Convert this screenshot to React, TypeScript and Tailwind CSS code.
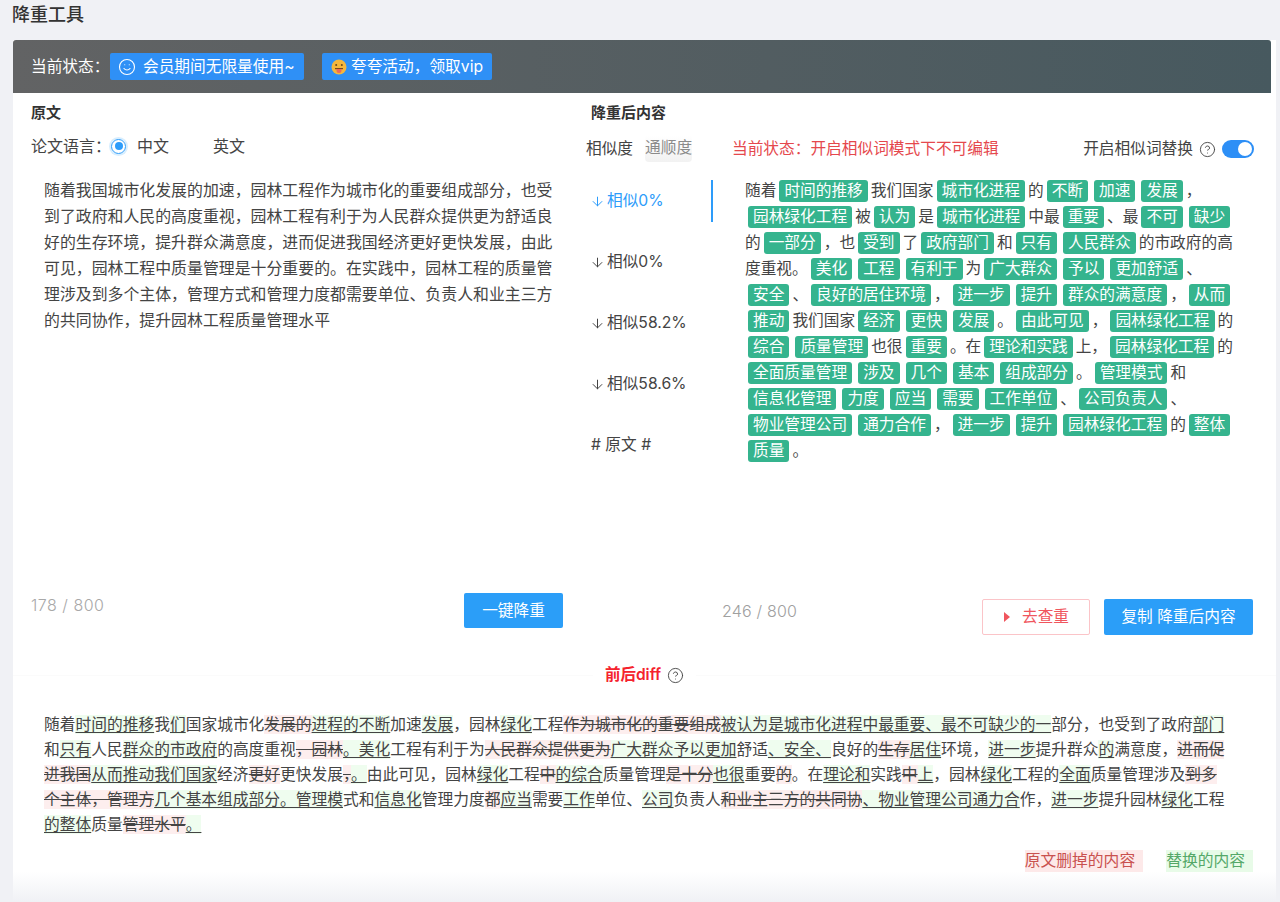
import { ArrowDown, CircleHelp, Smile } from "lucide-react";

// Rewritten text, one entry per line: [...] is a green tag
const resultLines = [
  "随着[时间的推移]我们国家[城市化进程]的[不断][加速][发展]，",
  "[园林绿化工程]被[认为]是[城市化进程]中最[重要]、最[不可][缺少]",
  "的[一部分]，也[受到]了[政府部门]和[只有][人民群众]的市政府的高",
  "度重视。[美化][工程][有利于]为[广大群众][予以][更加舒适]、",
  "[安全]、[良好的居住环境]，[进一步][提升][群众的满意度]，[从而]",
  "[推动]我们国家[经济][更快][发展]。[由此可见]，[园林绿化工程]的",
  "[综合][质量管理]也很[重要]。在[理论和实践]上，[园林绿化工程]的",
  "[全面质量管理][涉及][几个][基本][组成部分]。[管理模式]和",
  "[信息化管理][力度][应当][需要][工作单位]、[公司负责人]、",
  "[物业管理公司][通力合作]，[进一步][提升][园林绿化工程]的[整体]",
  "[质量]。",
];

// Diff text, one entry per line: {...} removed, [...] replaced
const diffLines = [
  "随着[时间的推移]我[们]国家城市化{发展的}[进程的不断]加速[发展]，园林[绿化]工程{作为城市化的重要组成}[被认为是城市化进程中最重要、最不可缺少的一]部分，也受到了政府[部门]",
  "和[只有]人民[群众的市政府]的高度重视{，园林}[。美化]工程有利于为{人民群众提供更为}[广大群众予以更加]舒适[、安全、]良好的{生存}[居住]环境，[进一步]提升群众[的]满意度，{进而促",
  "进我国}[从而推动我们国家]经济{更好}更快发展{，}[。]由此可见，园林[绿化]工程{中}[的综合]质量管理{是十分}[也很]重要{的}。在[理论和]实践{中}[上]，园林[绿化]工程的[全面]质量管理涉及{到多",
  "个主体，管理方}[几个基本组成部分。管理模]式和[信息化]管理力度{都}[应当]需要[工作]单位、[公司]负责人{和业主三方的共同协}[、物业管理公司通力合]作，[进一步]提升园林[绿化]工程",
  "[的整体]质量{管理水平}[。]",
];

const scores = ["相似0%", "相似0%", "相似58.2%", "相似58.6%"];

const ResultLine = ({ line }: { line: string }) => (
  <div className="h-[26px] whitespace-nowrap">
    {line.split(/(\[[^\]]*\])/).map((part, i) =>
      part.startsWith("[") ? (
        <span
          key={i}
          className="mx-[3px] inline-block h-[22px] rounded-[3px] bg-[#35b48e] px-[5px] leading-[22px] text-white"
        >
          {part.slice(1, -1)}
        </span>
      ) : (
        <span key={i}>{part}</span>
      ),
    )}
  </div>
);

const DiffLine = ({ line }: { line: string }) => (
  <div className="h-[25px] whitespace-nowrap">
    {line.split(/(\[[^\]]*\]|\{[^}]*\}|\{[^}]*$|^[^{[]*\})/).map((part, i) => {
      if (part.startsWith("[")) {
        return (
          <span key={i} className="bg-[#effdef] underline underline-offset-2">
            {part.slice(1, -1)}
          </span>
        );
      }
      if (part.startsWith("{") || part.endsWith("}")) {
        return (
          <span key={i} className="bg-[#fdeeee] line-through">
            {part.replace("{", "").replace("}", "")}
          </span>
        );
      }
      return <span key={i}>{part}</span>;
    })}
  </div>
);

export default function App() {
  return (
    <div className="flex h-[902px] w-[1280px] flex-col overflow-hidden bg-[#f0f1f5] font-['Inter','Noto_Sans_CJK_SC',sans-serif] text-[#444]">
      {/* Title */}
      <div className="h-[40px] pl-3 pt-[3px] text-[18px] font-medium leading-[24px] text-[#333]">
        降重工具
      </div>

      <div className="ml-[13px] mr-[4px] flex flex-1 flex-col bg-white">
        {/* Status bar */}
        <div className="mr-[5px] flex h-[53px] items-center rounded-t-[3px] bg-gradient-to-r from-[#626364] to-[#47595f] pl-[18px] text-[15.7px] text-white">
          <span className="w-[79px]">当前状态：</span>
          <span className="flex h-[27px] w-[194px] items-center rounded-[2px] bg-[#2f90f6] pl-[8px]">
            <Smile size={18} strokeWidth={1.5} />
            <span className="ml-[7px]">会员期间无限量使用~</span>
          </span>
          <span className="ml-[18px] flex h-[27px] w-[170px] items-center rounded-[2px] bg-[#2f90f6] pl-[9px]">
            <svg width="16" height="16" viewBox="0 0 16 16">
              <circle cx="8" cy="8" r="7.5" fill="#f5b73c" />
              <circle cx="5.2" cy="6" r="1" fill="#6b4a1c" />
              <circle cx="10.8" cy="6" r="1" fill="#6b4a1c" />
              <rect x="4" y="9" width="8" height="1.2" fill="#7a4a1c" />
              <path d="M5.5 10h5v1.5a2.5 2.5 0 0 1-5 0z" fill="#ef6a5a" />
            </svg>
            <span className="ml-[4px]">夸夸活动，领取vip</span>
          </span>
        </div>

        {/* Editors */}
        <div className="flex h-[571px]">
          {/* Source */}
          <div className="flex w-[558px] flex-col pb-[36px] pl-[18px] pr-[8px] pt-[10px]">
            <div className="text-[15px] font-semibold leading-[20px] text-[#333]">原文</div>
            <div className="mt-[11px] flex h-[24px] items-center text-[16px]">
              <span className="w-[80px]">论文语言：</span>
              <span className="flex h-[15px] w-[15px] items-center justify-center rounded-full border border-[#2d9cfa] ring-[2px] ring-[#d8eefe]">
                <span className="h-[8px] w-[8px] rounded-full bg-[#2d9cfa]" />
              </span>
              <span className="ml-[11px]">中文</span>
              <span className="ml-[44px]">英文</span>
            </div>
            <p className="mt-[20px] w-[525px] pl-[13px] text-[15.9px] leading-[26px]">
              随着我国城市化发展的加速，园林工程作为城市化的重要组成部分，也受到了政府和人民的高度重视，园林工程有利于为人民群众提供更为舒适良好的生存环境，提升群众满意度，进而促进我国经济更好更快发展，由此可见，园林工程中质量管理是十分重要的。在实践中，园林工程的质量管理涉及到多个主体，管理方式和管理力度都需要单位、负责人和业主三方的共同协作，提升园林工程质量管理水平
            </p>
            <div className="mt-auto flex items-start justify-between">
              <span className="mt-[2px] text-[16px] font-light leading-[20px] tracking-[0.5px] text-[#a8a8a8]">178 / 800</span>
              <button className="h-[35px] w-[99px] rounded-[2px] bg-[#2b9ef8] text-[15.7px] text-white">
                一键降重
              </button>
            </div>
          </div>

          {/* Result */}
          <div className="flex w-[705px] flex-col pb-[29px] pl-[15px] pt-[10px]">
            <div className="pl-[5px] text-[15px] font-semibold leading-[20px] text-[#333]">降重后内容</div>
            <div className="flex">
              <div className="w-[127px] shrink-0">
                <div className="mt-[14px] flex h-[24px] items-center text-[15.7px]">
                  <span>相似度</span>
                  <span className="ml-[12px] rounded-b-[4px] bg-gradient-to-b from-white to-[#f2f2f2] pb-[2px] text-[#8b8b8b]">
                    通顺度
                  </span>
                </div>
                <div className="mt-[19px] flex flex-col gap-[19px]">
                  {scores.map((label, i) => (
                    <div
                      key={i}
                      className={
                        i === 0
                          ? "flex h-[42px] items-center border-r-2 border-[#2d9cfa] pl-[4px] text-[15.7px] text-[#2d9cfa]"
                          : "flex h-[42px] items-center pl-[4px] text-[15.7px]"
                      }
                    >
                      <ArrowDown size={15} strokeWidth={1.6} />
                      <span className="ml-[2px]">{label}</span>
                    </div>
                  ))}
                  <div className="flex h-[42px] items-center pl-[5px] text-[15.7px]"># 原文 #</div>
                </div>
              </div>
              <div className="w-[554px]">
                <div className="mt-[14px] flex h-[24px] items-center text-[15.7px]">
                  <span className="ml-[19px] text-[#e5484d]">当前状态：开启相似词模式下不可编辑</span>
                  <span className="ml-auto">开启相似词替换</span>
                  <CircleHelp size={17} strokeWidth={1.3} className="ml-[6px]" />
                  <span className="ml-[6px] flex h-[18px] w-[32px] items-center justify-end rounded-full bg-[#2d8ff6] pr-[2px]">
                    <span className="h-[14px] w-[14px] rounded-full bg-white" />
                  </span>
                  <span className="w-[13px]" />
                </div>
                <div className="ml-[32px] mt-[17px] text-[15.7px] leading-[26px]">
                  {resultLines.map((line, i) => (
                    <ResultLine key={i} line={line} />
                  ))}
                </div>
              </div>
            </div>
            <div className="mt-auto flex items-start">
              <span className="ml-[136px] text-[16px] font-light leading-[24px] tracking-[0.2px] text-[#a0a0a0]">246 / 800</span>
              <button className="ml-auto flex h-[36px] w-[108px] items-center justify-center rounded-[2px] border border-[#fbc4c8] text-[15.7px] text-[#f0565e]">
                <svg width="8" height="10" viewBox="0 0 8 10" className="mr-[11px]">
                  <path d="M1 0l6 5-6 5z" fill="#f0565e" />
                </svg>
                去查重
              </button>
              <button className="ml-[14px] mr-[23px] h-[36px] w-[149px] rounded-[2px] bg-[#2b9ef8] text-[15.7px] text-white">
                复制 降重后内容
              </button>
            </div>
          </div>
        </div>

        {/* Diff */}
        <div className="flex h-[22px] items-center">
          <div className="h-px flex-1 bg-[#fbfbfb]" />
          <span className="ml-[12px] text-[15.5px] font-semibold text-[#f5222d]">前后diff</span>
          <CircleHelp size={17} strokeWidth={1.3} className="ml-[6px]" />
          <div className="ml-[12px] h-px flex-1 bg-[#fbfbfb]" />
        </div>
        <div className="ml-[31px] mt-[26px] text-[15.74px] leading-[25px]">
          {diffLines.map((line, i) => (
            <DiffLine key={i} line={line} />
          ))}
        </div>
        <div className="mr-[23px] mt-[13px] flex h-[22px] items-center justify-end gap-[23px] text-[15.77px]">
          <span className="bg-[#fde9e9] pr-[8px] leading-[22px] text-[#c9514f]">原文删掉的内容</span>
          <span className="bg-[#e8fbe8] pr-[8px] leading-[22px] text-[#55a868]">替换的内容</span>
        </div>
        <div className="mt-auto h-[30px] bg-gradient-to-b from-white to-[#f0f1f5]" />
      </div>
    </div>
  );
}
